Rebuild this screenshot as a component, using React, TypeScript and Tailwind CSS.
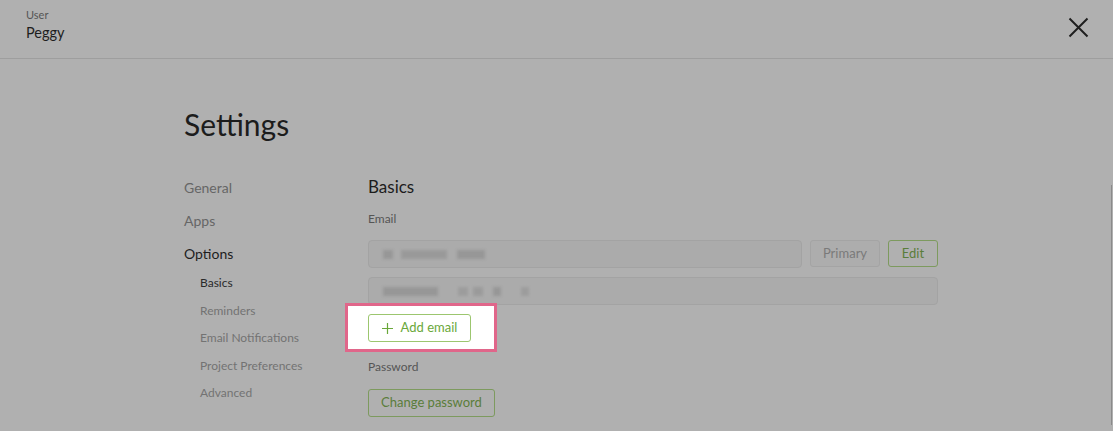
import React from "react";

const font = { fontFamily: "Lato, 'Noto Sans', sans-serif" };

function Blur({ w, ml = 0, o = 1 }: { w: number; ml?: number; o?: number }) {
  return (
    <div
      className="h-[9px] bg-[#979797] blur-[1.5px]"
      style={{ width: w, marginLeft: ml, opacity: o }}
    />
  );
}

export default function App() {
  return (
    <div className="relative w-[1113px] h-[431px] overflow-hidden bg-[#b0b0b0]" style={font}>
      {/* Header */}
      <div className="h-[59px] border-b border-[#9e9e9e] flex items-start justify-between pl-[26px] pr-[24px]">
        <div className="pt-[8px]">
          <div className="text-[11px] leading-[14px] text-[#555]">User</div>
          <div className="mt-[2px] text-[14.5px] leading-[18px] text-[#1e1e1e]">Peggy</div>
        </div>
        <svg className="mt-[17px]" width="21" height="21" viewBox="0 0 21 21">
          <path d="M1.5 1.5 L19.5 19.5 M19.5 1.5 L1.5 19.5" stroke="#1f1f1f" strokeWidth="2" strokeLinecap="butt" />
        </svg>
      </div>

      {/* Main */}
      <div className="pl-[184px]">
        <div className="mt-[47px] text-[30px] leading-[36px] text-[#1c1c1c]">Settings</div>
        <div className="mt-[35px] flex">
          {/* Nav */}
          <div className="w-[184px] flex flex-col">
            <div className="flex flex-col gap-[11px] text-[14px] leading-[22px]">
              <div className="text-[#666]">General</div>
              <div className="text-[#666]">Apps</div>
              <div className="text-[#1e1e1e]">Options</div>
            </div>
            <div className="mt-[4px] pl-[16px] flex flex-col text-[12px] leading-[27.5px]">
              <div className="text-[#2a2a2a]">Basics</div>
              <div className="text-[#737373]">Reminders</div>
              <div className="text-[#737373]">Email Notifications</div>
              <div className="text-[#737373]">Project Preferences</div>
              <div className="text-[#737373]">Advanced</div>
            </div>
          </div>

          {/* Content */}
          <div className="w-[570px] flex flex-col items-start">
            <div className="text-[17px] leading-[20px] text-[#1c1c1c]">Basics</div>
            <div className="mt-[14px] text-[12px] leading-[16px] text-[#555]">Email</div>
            <div className="mt-[13px] w-full flex gap-[8px]">
              <div className="flex-1 h-[28px] rounded-[4px] border border-[#a3a3a3] bg-[#ababab] flex items-center pl-[14px]">
                <Blur w={10} />
                <Blur w={46} ml={8} o={0.85} />
                <Blur w={28} ml={10} />
              </div>
              <div className="w-[70px] h-[27px] rounded-[3px] border border-[#a4a4a4] bg-[#adadad] flex items-center justify-center text-[13px] text-[#7a7a7a]">
                Primary
              </div>
              <div className="w-[50px] h-[27px] rounded-[3px] border border-[#7d9a5e] bg-[#b0b0b0] flex items-center justify-center text-[13px] text-[#5a7d3a]">
                Edit
              </div>
            </div>
            <div className="mt-[9px] w-full h-[28px] rounded-[4px] border border-[#a3a3a3] bg-[#ababab] flex items-center pl-[14px]">
              <Blur w={55} />
              <Blur w={10} ml={20} o={0.7} />
              <Blur w={10} ml={5} o={0.8} />
              <Blur w={8} ml={10} />
              <Blur w={8} ml={20} o={0.7} />
            </div>

            {/* Highlighted add email */}
            <div className="-mt-[2px] -ml-[23px] border-[3px] border-[#e0668a] bg-white pl-[20px] pr-[23px] pt-[8px] pb-[7px]">
              <div className="w-[103px] h-[28px] rounded-[3px] border border-[#9cc66f] bg-white flex items-center justify-center gap-[8px] text-[13px] text-[#6aa83a]">
                <svg width="11" height="11" viewBox="0 0 11 11">
                  <path d="M5.5 0 V11 M0 5.5 H11" stroke="#6aa83a" strokeWidth="1.2" />
                </svg>
                <span>Add email</span>
              </div>
            </div>

            <div className="mt-[7px] text-[12px] leading-[16px] text-[#555]">Password</div>
            <div className="mt-[14px] w-[127px] h-[28px] rounded-[3px] border border-[#7d9a5e] bg-[#b0b0b0] flex items-center justify-center text-[13px] text-[#5a7d3a]">
              Change password
            </div>
          </div>
        </div>
      </div>

      {/* scrollbar */}
      <div className="absolute right-[1px] top-[185px] w-[1px] h-[240px] bg-[#8a8a8a]" />
    </div>
  );
}
